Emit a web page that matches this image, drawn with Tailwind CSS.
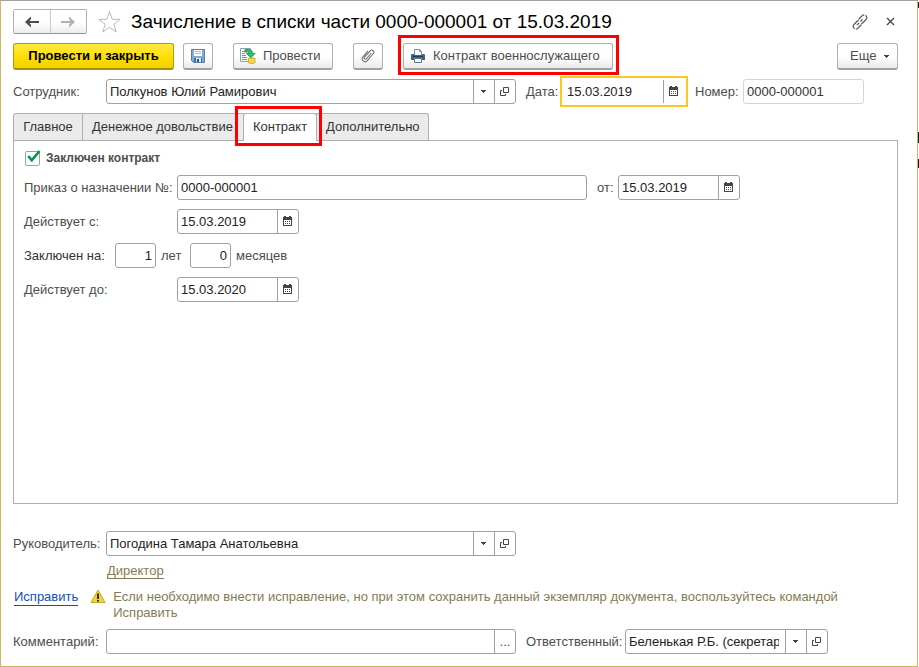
<!DOCTYPE html>
<html lang="ru">
<head>
<meta charset="utf-8">
<meta name="viewport" content="width=device-width, initial-scale=1">
<title>Зачисление в списки части 0000-000001 от 15.03.2019</title>
<script src="https://cdn.jsdelivr.net/npm/@tailwindcss/browser@4"></script>
</head>
<body class="flex min-h-screen bg-white font-['Liberation_Sans',Arial,sans-serif] text-[13px] leading-4 text-[#4d4d4d]">
<svg class="hidden" aria-hidden="true">
  <symbol id="cal" viewBox="0 0 9 10">
    <path fill="#444" d="M0 1h1V0h2v1h3V0h2v1h1v9H0z"/>
    <path fill="#fff" d="M1 4h7v5H1z"/>
    <path fill="#444" d="M2 5h1v1H2zM4 5h1v1H4zM6 5h1v1H6zM2 7h1v1H2zM4 7h1v1H4zM6 7h1v1H6z"/>
  </symbol>
  <symbol id="open" viewBox="0 0 9 9">
    <path fill="none" stroke="#444" d="M3.500.500h5v5h-5zM2 3.500H.500v5h5V7"/>
  </symbol>
  <symbol id="drop" viewBox="0 0 5 3"><path fill="#444" d="M0 0h5v1H4v1H3v1H2V2H1V1H0z"/></symbol>
</svg>
<main class="flex min-w-0 flex-1 flex-col border border-t-[#a0a0a0] border-x-[#c9b764] border-b-[#c9b764] pt-2 pr-[19px] pb-3 pl-3">
  <header class="flex h-[25px] items-center">
    <div class="flex h-[25px] w-[74px] shrink-0 rounded-[2px] border border-[#b0b0b0] border-b-[#959595] bg-linear-to-b from-white from-50% to-[#ededed]">
      <button type="button" aria-label="Назад" class="flex flex-1 items-center justify-center border-r border-[#c8c8c8]">
        <svg class="h-3 w-[14px]" viewBox="0 0 14 12"><path fill="#4a4a4a" d="M0 6l6-5.500v2.500L4.500 5H14v2H4.500L6 9v2.500z"/></svg>
      </button>
      <button type="button" aria-label="Вперед" class="flex flex-1 items-center justify-center">
        <svg class="h-3 w-[14px]" viewBox="0 0 14 12"><path fill="#b0b0b0" d="M14 6L8 .500v2.500L9.500 5H0v2h9.500L8 9v2.500z"/></svg>
      </button>
    </div>
    <button type="button" aria-label="В избранное" class="ml-[11px] shrink-0">
      <svg class="h-6 w-[23px]" viewBox="0 0 23 24"><path fill="#fff" stroke="#b3bac2" d="M11.500 1.500l2.700 7.800 8 .1-6.400 4.800 2.400 7.700-6.700-4.600-6.700 4.600 2.400-7.700L.8 9.400l8-.1z"/></svg>
    </button>
    <h1 class="ml-[10px] min-w-0 flex-1 truncate text-[19px] leading-6 text-black">Зачисление в списки части 0000-000001 от 15.03.2019</h1>
    <button type="button" aria-label="Получить ссылку" class="shrink-0">
      <svg class="size-4" viewBox="0 0 16 16" fill="none" stroke="#555" stroke-width="1.200"><path d="M6.500 5.500l3.700-3.800a2.700 2.700 0 0 1 2-.9M13.500 1.300a2.700 2.700 0 0 1 .8 3.900L11.200 8.500a2.600 2.600 0 0 1-1.900.8M9.500 10.500l-3.700 3.800a2.700 2.700 0 0 1-2 .9M2.500 14.700a2.700 2.700 0 0 1-.8-3.900L4.800 7.500a2.600 2.600 0 0 1 1.900-.8"/><path d="M5 11l2.200-2.200M8.300 7.700L10.500 5.500"/></svg>
    </button>
    <button type="button" aria-label="Закрыть" class="mr-[3px] ml-[18px] shrink-0">
      <svg class="size-[9px]" viewBox="0 0 9 9" stroke="#444" stroke-width="1.300"><path d="M1 1l7 7M8 1L1 8"/></svg>
    </button>
  </header>

  <div class="mt-[9px] flex h-[27px]">
    <button type="button" class="w-[161px] rounded-[3px] border border-[#b09a10] border-b-2 border-b-[#a89000] bg-linear-to-b from-[#ffea3c] via-[#ffe000] to-[#f0cf00] font-bold whitespace-nowrap text-black">Провести и закрыть</button>
    <button type="button" aria-label="Записать" class="ml-[9px] flex w-[30px] items-center justify-center rounded-[3px] border border-[#b0b0b0] border-b-2 border-b-[#a0a0a0] bg-linear-to-b from-white from-50% to-[#ebebeb]">
      <svg class="size-[14px]" viewBox="0 0 14 14"><path fill="#7fa9d6" stroke="#557da8" d="M.500.500h13v13h-11l-2-2z"/><path fill="#fff" d="M3 1h8v6H3z"/><path stroke="#a9b6c4" d="M4 2.500h6M4 4.500h6"/><path fill="#4b6c8c" d="M3 9h8v4H3z"/><path fill="#e4ebf2" d="M5 9h5v4H5z"/><path fill="#34556f" d="M6 10h2v3H6z"/></svg>
    </button>
    <button type="button" class="ml-5 flex w-[100px] items-center rounded-[3px] border border-[#b0b0b0] border-b-2 border-b-[#a0a0a0] bg-linear-to-b from-white from-50% to-[#ebebeb] pl-[6px]">
      <svg class="size-4" viewBox="0 0 16 16"><path fill="#fff" stroke="#8ca0b3" d="M.500.500h10v13H.500z"/><path stroke="#7390ab" d="M2 3.500h4M2 5.500h3M2 7.500h4M2 9.500h5M2 11.500h5"/><path fill="#27c46b" stroke="#0c8a43" stroke-width=".8" d="M5 1.500h4q3.500 0 3.500 4H15l-4.200 4.200L6.500 5.500H9Q9 4 7.500 4H5z"/><path fill="#f0c630" stroke="#b98c10" stroke-width=".6" d="M8.500 10.500c0-1 6.500-1 6.500 0v4c0 1.300-6.500 1.300-6.500 0z"/><path fill="none" stroke="#fff0a0" stroke-width=".8" d="M9 11.500c1 .7 4.500.7 5.500 0M9 13.500c1 .7 4.500.7 5.500 0"/></svg>
      <span class="ml-[7px]">Провести</span>
    </button>
    <button type="button" aria-label="Присоединенные файлы" class="ml-5 flex w-[30px] items-center justify-center rounded-[3px] border border-[#b0b0b0] border-b-2 border-b-[#a0a0a0] bg-linear-to-b from-white from-50% to-[#ebebeb]">
      <svg class="size-[14px]" viewBox="0 0 14 14" fill="none" stroke="#6e6e6e" stroke-width="1.100" stroke-linecap="round"><path d="M10 4.500l-4.700 5.300a1.200 1.200 0 0 1-1.800-1.700l5.700-6.300a2 2 0 0 1 3.200 2.700l-6 7.100a2.900 2.900 0 0 1-4.500-3.800l4.900-5.700"/></svg>
    </button>
    <div class="relative ml-5 flex w-[210px]">
      <button type="button" class="flex flex-1 items-center rounded-[3px] border border-[#b0b0b0] border-b-2 border-b-[#a0a0a0] bg-linear-to-b from-white from-50% to-[#ebebeb] pl-[7px] whitespace-nowrap">
        <svg class="size-[14px]" viewBox="0 0 14 14"><path fill="#fff" stroke="#7d8fa1" d="M3.500 6V.500h5l2 2V6"/><path fill="none" stroke="#7d8fa1" d="M8.500.500v2h2"/><path fill="#3c6287" d="M0 6q0-1 1-1h2v1h8V5h1q2 0 2 1v5h-3V9H3v2H0z"/><path fill="#1f3f60" d="M2 7h10v1H2z"/><path fill="#fff" stroke="#5b7590" d="M3.500 9.500h7v4h-7z"/></svg>
        <span class="ml-2">Контракт военнослужащего</span>
      </button>
      <span class="pointer-events-none absolute -top-2 -right-[6px] -bottom-[5px] -left-[5px] border-3 border-[#ff0000]"></span>
    </div>
    <button type="button" class="ml-auto flex w-[61px] items-center rounded-[3px] border border-[#b0b0b0] border-b-2 border-b-[#a0a0a0] bg-linear-to-b from-white from-50% to-[#ebebeb] pl-3">Еще<svg class="ml-2 h-[3px] w-[5px]"><use href="#drop"/></svg></button>
  </div>

  <div class="mt-[9px] flex h-[25px] items-center">
    <label for="employee" class="w-[93px] shrink-0">Сотрудник:</label>
    <div class="flex h-[25px] w-[410px] rounded-[3px] border border-[#a0a0a0]">
      <input id="employee" type="text" value="Полкунов Юлий Рамирович" class="min-w-0 flex-1 px-[3px] text-[#222] outline-none">
      <button type="button" aria-label="Выбрать сотрудника" class="flex w-[21px] items-center justify-center border-l border-[#a0a0a0] pr-px"><svg class="h-[3px] w-[5px]"><use href="#drop"/></svg></button>
      <button type="button" aria-label="Открыть сотрудника" class="flex w-[21px] items-center justify-center border-l border-[#a0a0a0] pr-px"><svg class="size-[9px]"><use href="#open"/></svg></button>
    </div>
    <label for="docdate" class="ml-[10px] w-[34px] shrink-0">Дата:</label>
    <div class="flex h-[31px] w-32 shrink-0 border-2 border-[#fac81e] px-px py-[2px]">
      <input id="docdate" type="text" value="15.03.2019" class="min-w-0 flex-1 px-1 text-[#222] outline-none">
      <button type="button" aria-label="Календарь" class="flex w-[22px] items-center justify-center border-l border-[#a0a0a0] pr-[2px] pb-px"><svg class="h-[10px] w-[9px]"><use href="#cal"/></svg></button>
    </div>
    <label for="number" class="ml-[7px] w-12 shrink-0">Номер:</label>
    <input id="number" type="text" value="0000-000001" class="h-[25px] w-[121px] rounded-[3px] border border-[#d5d5d5] px-[3px] text-[#333]">
  </div>

  <div role="tablist" class="mt-[9px] flex h-7 items-start text-[#333]">
    <button role="tab" type="button" class="h-[27px] w-[70px] rounded-tl-[3px] border border-b-0 border-[#b0b0b0] bg-[#ebebeb]">Главное</button>
    <button role="tab" type="button" class="-ml-px h-[27px] w-[162px] border border-b-0 border-[#b0b0b0] bg-[#ebebeb] px-[9px] text-left whitespace-nowrap">Денежное довольствие</button>
    <div class="relative z-10 -ml-px flex h-7 w-[74px]">
      <button role="tab" type="button" aria-selected="true" class="flex-1 rounded-t-[3px] border border-b-0 border-[#b0b0b0] bg-white pb-px">Контракт</button>
      <span class="pointer-events-none absolute -top-[7px] -right-[5px] -bottom-[5px] -left-2 border-3 border-[#ff0000]"></span>
    </div>
    <button role="tab" type="button" class="-ml-px h-[27px] w-[113px] rounded-tr-[3px] border border-b-0 border-[#b0b0b0] bg-[#ebebeb] px-[9px] text-left">Дополнительно</button>
  </div>
  <section role="tabpanel" aria-label="Контракт" class="-mt-px flex flex-1 flex-col gap-[9px] border border-[#b0b0b0] px-[10px] pt-[9px] pb-4">
    <label class="flex h-4 items-center text-[12px] font-bold">
      <span class="relative ml-px size-[15px]">
        <input type="checkbox" checked class="absolute inset-0 size-[15px] appearance-none rounded-[2px] border border-[#a0a0a0] bg-white">
        <svg class="pointer-events-none absolute -top-px left-[2px] h-[13px] w-[14px]" viewBox="0 0 14 13"><path fill="none" stroke="#009646" stroke-width="2.600" d="M1.200 6l3.600 4.300L12.500 1"/></svg>
      </span>
      <span class="ml-[6px]">Заключен контракт</span>
    </label>
    <div class="flex h-[25px] items-center">
      <label for="order" class="w-[153px] shrink-0">Приказ о назначении №:</label>
      <input id="order" type="text" value="0000-000001" class="h-[25px] w-[410px] min-w-0 rounded-[3px] border border-[#a0a0a0] px-[3px] text-[#222]">
      <label for="orderdate" class="ml-[10px] w-[21px] shrink-0">от:</label>
      <div class="flex h-[25px] w-[122px] shrink-0 rounded-[3px] border border-[#a0a0a0]">
        <input id="orderdate" type="text" value="15.03.2019" class="min-w-0 flex-1 px-[3px] text-[#222] outline-none">
        <button type="button" aria-label="Календарь" class="flex w-[21px] items-center justify-center border-l border-[#a0a0a0] pr-px pb-px"><svg class="h-[10px] w-[9px]"><use href="#cal"/></svg></button>
      </div>
    </div>
    <div class="flex h-[25px] items-center">
      <label for="from" class="w-[153px] shrink-0">Действует с:</label>
      <div class="flex h-[25px] w-[122px] rounded-[3px] border border-[#a0a0a0]">
        <input id="from" type="text" value="15.03.2019" class="min-w-0 flex-1 px-[3px] text-[#222] outline-none">
        <button type="button" aria-label="Календарь" class="flex w-[21px] items-center justify-center border-l border-[#a0a0a0] pr-px pb-px"><svg class="h-[10px] w-[9px]"><use href="#cal"/></svg></button>
      </div>
    </div>
    <div class="flex h-[25px] items-center">
      <label for="years" class="w-[91px] shrink-0 text-[#333]">Заключен на:</label>
      <input id="years" type="text" value="1" class="h-[25px] w-[41px] rounded-[3px] border border-[#a0a0a0] px-[3px] text-right text-[#222]">
      <label for="years" class="ml-[5px] w-[29px]">лет</label>
      <input id="months" type="text" value="0" class="h-[25px] w-[41px] rounded-[3px] border border-[#a0a0a0] px-[3px] text-right text-[#222]">
      <label for="months" class="ml-[5px]">месяцев</label>
    </div>
    <div class="flex h-[25px] items-center">
      <label for="to" class="w-[153px] shrink-0">Действует до:</label>
      <div class="flex h-[25px] w-[122px] rounded-[3px] border border-[#a0a0a0]">
        <input id="to" type="text" value="15.03.2020" class="min-w-0 flex-1 px-[3px] text-[#222] outline-none">
        <button type="button" aria-label="Календарь" class="flex w-[21px] items-center justify-center border-l border-[#a0a0a0] pr-px pb-px"><svg class="h-[10px] w-[9px]"><use href="#cal"/></svg></button>
      </div>
    </div>
  </section>

  <footer>
    <div class="mt-[27px] flex h-[25px] items-center">
      <label for="head" class="w-[93px] shrink-0">Руководитель:</label>
      <div class="flex h-[25px] w-[410px] rounded-[3px] border border-[#a0a0a0]">
        <input id="head" type="text" value="Погодина Тамара Анатольевна" class="min-w-0 flex-1 px-[3px] text-[#222] outline-none">
        <button type="button" aria-label="Выбрать руководителя" class="flex w-[21px] items-center justify-center border-l border-[#a0a0a0] pr-px"><svg class="h-[3px] w-[5px]"><use href="#drop"/></svg></button>
        <button type="button" aria-label="Открыть руководителя" class="flex w-[21px] items-center justify-center border-l border-[#a0a0a0] pr-px"><svg class="size-[9px]"><use href="#open"/></svg></button>
      </div>
    </div>
    <div class="mt-[7px] flex pl-[94px]"><a href="#" class="border-b border-[#857a55] leading-[15px] text-[#857a55]">Директор</a></div>
    <div class="mt-[10px] flex items-start text-[#857a55]">
      <a href="#" class="ml-px border-b border-[#1450b4] text-[#1450b4]">Исправить</a>
      <svg class="ml-3 h-[15px] w-4 shrink-0" viewBox="0 0 16 15"><path fill="#f5d52a" stroke="#c8a820" stroke-linejoin="round" d="M8 1l7 12.500H1z"/><path fill="#333" d="M7 4.500h2V10H7zM7 11h2v1.500H7z"/></svg>
      <p class="ml-[7px] max-w-[740px]">Если необходимо внести исправление, но при этом сохранить данный экземпляр документа, воспользуйтесь командой Исправить</p>
    </div>
    <div class="mt-2 flex h-[25px] items-center">
      <label for="comment" class="w-[93px] shrink-0">Комментарий:</label>
      <div class="flex h-[25px] w-[410px] rounded-[3px] border border-[#a0a0a0]">
        <input id="comment" type="text" class="min-w-0 flex-1 px-[3px] text-[#222] outline-none">
        <button type="button" aria-label="Редактировать комментарий" class="w-[21px] border-l border-[#a0a0a0]">...</button>
      </div>
      <label for="resp" class="ml-[10px] w-[99px] shrink-0">Ответственный:</label>
      <div class="flex h-[25px] w-[203px] rounded-[3px] border border-[#a0a0a0]">
        <input id="resp" type="text" value="Беленькая Р.Б. (секретарь)" class="mr-[6px] ml-[3px] min-w-0 flex-1 text-[#222] outline-none">
        <button type="button" aria-label="Выбрать ответственного" class="flex w-[21px] items-center justify-center border-l border-[#a0a0a0] pr-px"><svg class="h-[3px] w-[5px]"><use href="#drop"/></svg></button>
        <button type="button" aria-label="Открыть ответственного" class="flex w-[21px] items-center justify-center border-l border-[#a0a0a0] pr-px"><svg class="size-[9px]"><use href="#open"/></svg></button>
      </div>
    </div>
  </footer>
</main>
<div class="w-px shrink-0 bg-white" aria-hidden="true">
  <div class="mt-[2px] h-[6px] bg-[#222]"></div>
  <div class="mt-[124px] h-[11px] bg-[#0a1838]"></div>
  <div class="mt-4 h-[9px] bg-[#301004]"></div>
</div>
</body>
</html>
